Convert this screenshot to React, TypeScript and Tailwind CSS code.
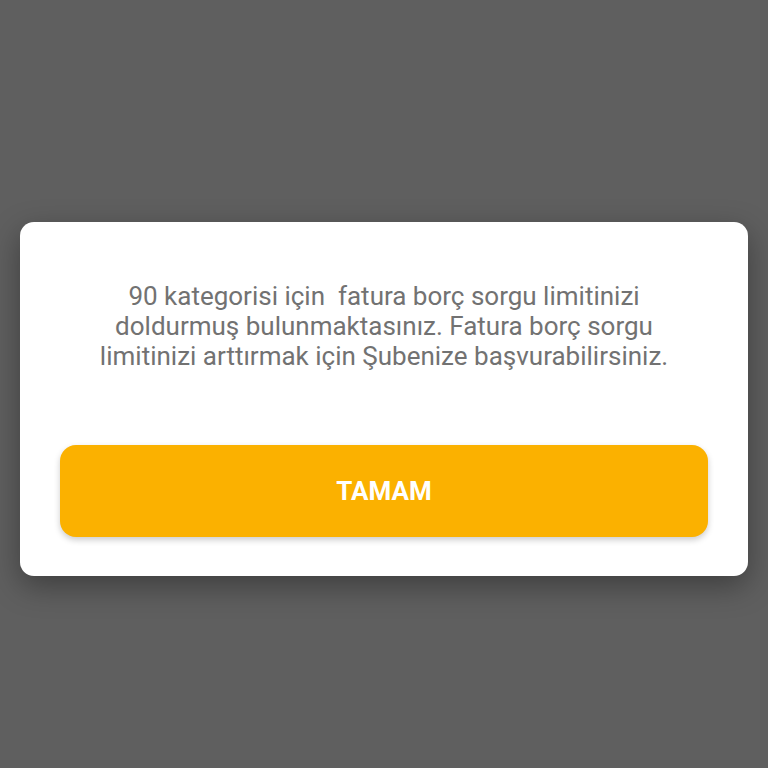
export default function App() {
  return (
    <div className="w-[768px] h-[768px] bg-[#5f5f5f] flex flex-col" style={{ fontFamily: "Roboto, 'Noto Sans', sans-serif" }}>
      <div className="mt-[222px] mx-[20px] h-[354px] bg-white rounded-[14px] shadow-[0_10px_30px_rgba(0,0,0,0.35)] flex flex-col">
        <p className="mt-[59px] text-center text-[26px] leading-[30px] text-[#727272] px-[20px]">
          90 kategorisi için&nbsp; fatura borç sorgu limitinizi<br />
          doldurmuş bulunmaktasınız. Fatura borç sorgu<br />
          limitinizi arttırmak için Şubenize başvurabilirsiniz.
        </p>
        <button className="mt-[74px] mx-[40px] h-[92px] rounded-[16px] bg-[#fbb100] text-white text-[26px] font-bold shadow-[0_3px_6px_rgba(0,0,0,0.2)]">
          TAMAM
        </button>
      </div>
    </div>
  );
}
